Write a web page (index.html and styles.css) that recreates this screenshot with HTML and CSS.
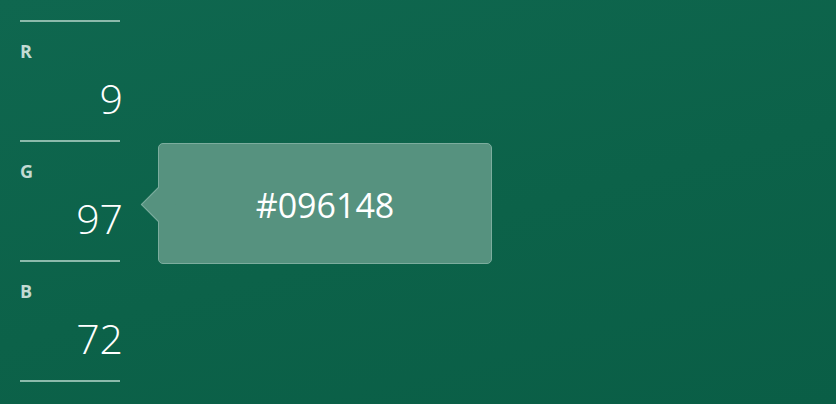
FILE: index.html
```html
<!DOCTYPE html>
<html>
<head>
<meta charset="utf-8">
<link rel="stylesheet" href="styles.css">
</head>
<body>
<div class="page">
  <div class="channels">
    <div class="channel">
      <div class="label">R</div>
      <div class="value">9</div>
    </div>
    <div class="channel">
      <div class="label">G</div>
      <div class="value">97</div>
    </div>
    <div class="channel">
      <div class="label">B</div>
      <div class="value">72</div>
    </div>
    <div class="end-rule"></div>
  </div>
  <div class="tooltip">#096148</div>
</div>
</body>
</html>
```

FILE: styles.css
```css
html, body {
  margin: 0;
  padding: 0;
}
body {
  width: 836px;
  height: 404px;
  overflow: hidden;
  background: linear-gradient(165deg, #0f674f 0%, #0c6249 55%, #0a5e46 100%);
  font-family: "Open Sans", "Noto Sans", sans-serif;
  color: #fff;
}
.page {
  position: relative;
  width: 836px;
  height: 404px;
  padding: 20px 0 0 20px;
  box-sizing: border-box;
}
.channels {
  width: 100px;
  display: flex;
  flex-direction: column;
}
.channel {
  border-top: 2px solid #8cbaab;
  padding-top: 19px;
  box-sizing: border-box;
  height: 120px;
}
.label {
  font-size: 18px;
  font-weight: 700;
  line-height: 20px;
  height: 20px;
  color: #c3dbd3;
}
.value {
  margin-top: 12px;
  margin-right: -3px;
  font-size: 41px;
  font-weight: 300;
  line-height: 50px;
  height: 50px;
  text-align: right;
  color: #fff;
}
.end-rule {
  border-top: 2px solid #8cbaab;
}
.tooltip {
  position: absolute;
  left: 158px;
  top: 143px;
  width: 334px;
  height: 121px;
  box-sizing: border-box;
  background: #56927f;
  border: 1px solid #7cad9e;
  border-radius: 5px;
  display: flex;
  align-items: center;
  justify-content: center;
  font-size: 34px;
  font-weight: 400;
  padding-top: 2px;
  color: #fff;
}
.tooltip::before {
  content: "";
  position: absolute;
  left: -13px;
  top: 48px;
  width: 24px;
  height: 24px;
  background: #56927f;
  border-left: 1px solid #7cad9e;
  border-bottom: 1px solid #7cad9e;
  transform: rotate(45deg);
}
```
